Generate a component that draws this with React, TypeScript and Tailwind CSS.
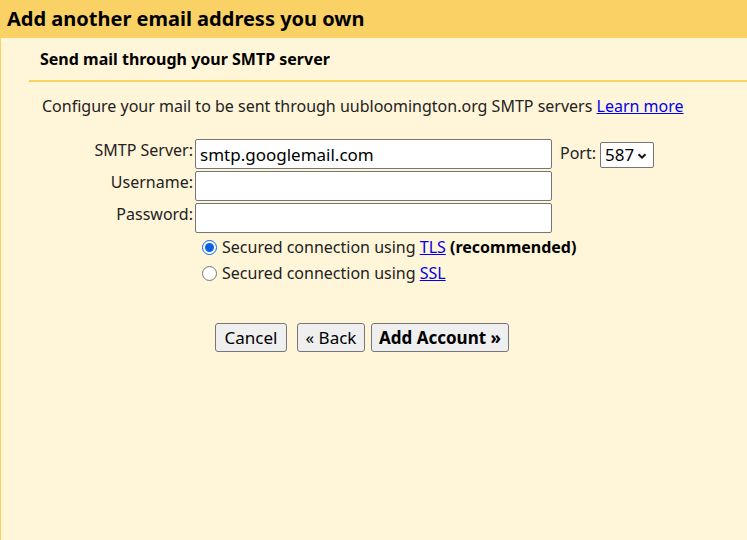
import { useState } from "react";

const font = { fontFamily: '"Noto Sans", "Open Sans", sans-serif' };

function Row({ label, children }: { label: string; children: React.ReactNode }) {
  return (
    <div className="flex items-start h-[32px]">
      <label className="w-[192px] text-right leading-[22px]">{label}</label>
      <div className="ml-[2px] flex items-start">{children}</div>
    </div>
  );
}

export default function App() {
  const [tls, setTls] = useState(true);

  return (
    <div className="w-[747px] h-[540px] flex flex-col bg-[#fff5d9] text-[#222] text-[16px]" style={font}>
      <div className="h-[38px] bg-[#fad165] flex items-center px-[7px] shrink-0">
        <h1 className="text-[20px] font-bold text-black leading-none">Add another email address you own</h1>
      </div>

      <div className="flex-1 border-l border-[#fad165]">
        <div className="ml-[28px] h-[44px] border-b-2 border-[#fad165] flex items-center pl-[11px]">
          <h2 className="text-[16px] font-bold text-black leading-none pb-[1px]">Send mail through your SMTP server</h2>
        </div>

        <p className="ml-[41px] mt-[13px] leading-[22px]">
          Configure your mail to be sent through uubloomington.org SMTP servers{" "}
          <a href="#" className="text-[#0000ee] underline">Learn more</a>
        </p>

        <div className="mt-[22px]">
          <Row label="SMTP Server:">
            <input
              defaultValue="smtp.googlemail.com"
              className="w-[357px] h-[30px] bg-white border border-[#767676] rounded-[2px] px-[4px] text-[17px] text-black outline-none"
            />
            <span className="ml-[8px] mt-[3px] leading-[22px]">Port:</span>
            <div className="ml-[4px] mt-[3px] w-[54px] h-[26px] bg-white border border-[#767676] rounded-[2px] flex items-center pl-[4px] gap-[3px] text-[17px] text-black">
              587
              <svg width="10" height="10" viewBox="0 0 10 10" className="mt-[1px]">
                <path d="M1.5 3.2 L5 6.7 L8.5 3.2" fill="none" stroke="#111" strokeWidth="2" />
              </svg>
            </div>
          </Row>
          <Row label="Username:">
            <input className="w-[357px] h-[30px] bg-white border border-[#767676] rounded-[2px] px-[4px] text-[17px] outline-none" />
          </Row>
          <Row label="Password:">
            <input type="password" className="w-[357px] h-[30px] bg-white border border-[#767676] rounded-[2px] px-[4px] text-[17px] outline-none" />
          </Row>
        </div>

        <div className="ml-[201px] mt-[-1px] flex flex-col">
          <label className="flex items-center h-[26px] gap-[5px]">
            <input type="radio" name="sec" checked={tls} onChange={() => setTls(true)} className="w-[15px] h-[15px] m-0 accent-[#0b62e8]" />
            <span>
              Secured connection using <a href="#" className="text-[#0000ee] underline">TLS</a>{" "}
              <b className="text-black">(recommended)</b>
            </span>
          </label>
          <label className="flex items-center h-[26px] gap-[5px]">
            <input type="radio" name="sec" checked={!tls} onChange={() => setTls(false)} className="w-[15px] h-[15px] m-0" />
            <span>
              Secured connection using <a href="#" className="text-[#0000ee] underline">SSL</a>
            </span>
          </label>
        </div>

        <div className="ml-[214px] mt-[37px] flex text-[17px] text-black">
          <button className="w-[72px] h-[29px] bg-[#efefef] border border-[#767676] rounded-[3px]">Cancel</button>
          <button className="ml-[10px] w-[68px] h-[29px] bg-[#efefef] border border-[#767676] rounded-[3px]">« Back</button>
          <button className="ml-[6px] w-[138px] h-[29px] bg-[#efefef] border border-[#767676] rounded-[3px] font-bold">Add Account »</button>
        </div>
      </div>
    </div>
  );
}
